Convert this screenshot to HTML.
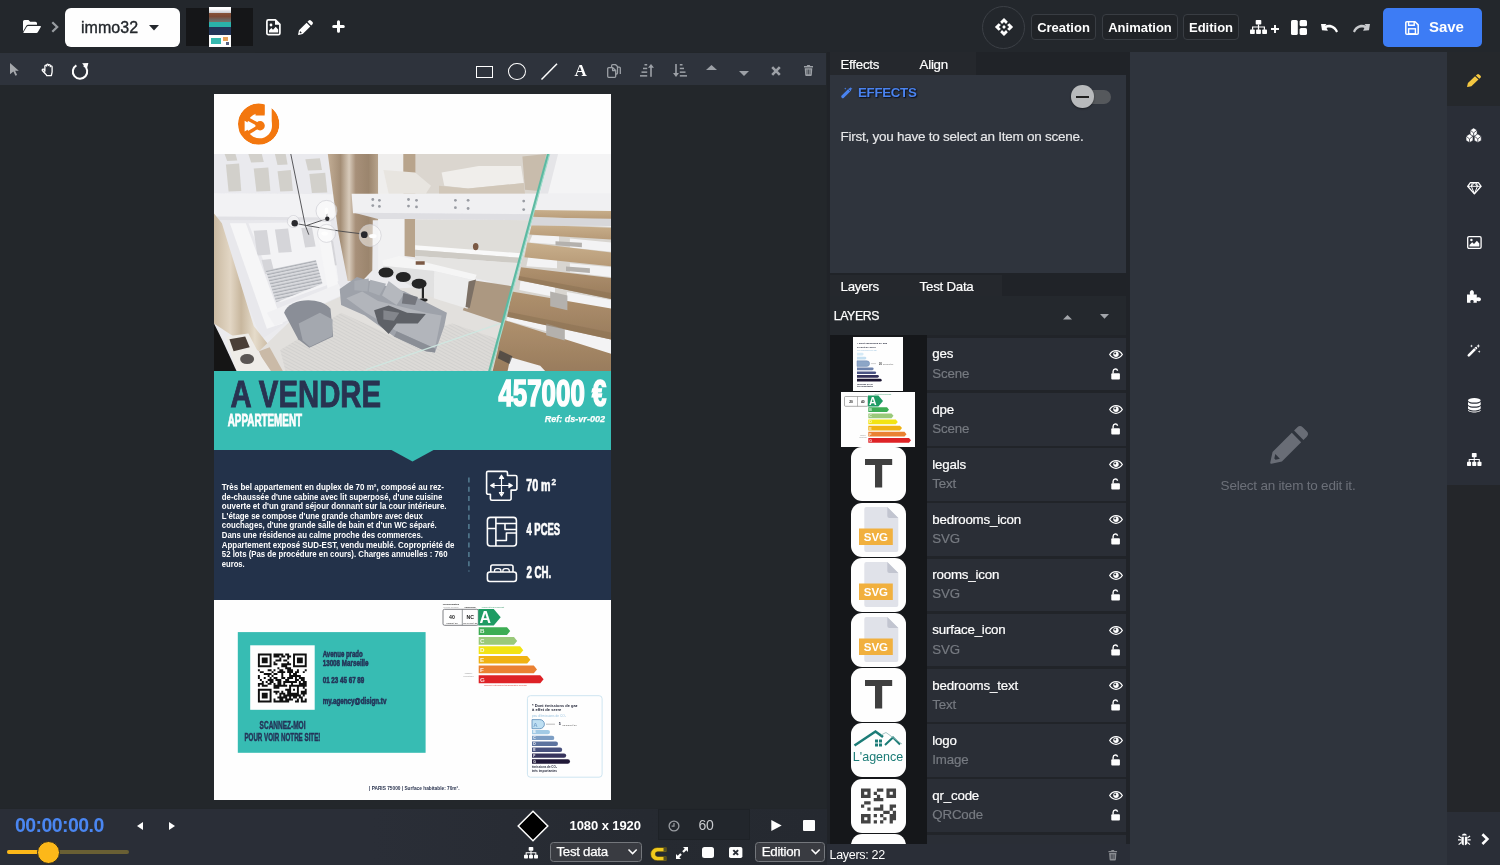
<!DOCTYPE html>
<html lang="en">
<head>
<meta charset="utf-8">
<title>Editor</title>
<style>
*{box-sizing:border-box;margin:0;padding:0}
html,body{width:1500px;height:865px;overflow:hidden;background:#23272b;font-family:"Liberation Sans",Arial,sans-serif;color:#fff}
.abs{position:absolute}
#app{will-change:transform;opacity:.9999;position:relative;width:1500px;height:865px;overflow:hidden;background:#23272b}
#topbar{left:0;top:0;width:1500px;height:52px;background:#24282d}
#toolbar{left:0;top:52.500px;width:825.500px;height:33px;background:#2f343d}
#stage{left:0;top:85px;width:825.500px;height:723px;background:#24282c}
#bottombar{left:0;top:808.500px;width:827px;height:56.500px;background:linear-gradient(90deg,#2b2f38 0,#2b2f38 45%,#272b32 78%,#262a31 100%)}
#mid{left:827px;top:52px;width:303px;height:813px;background:#212429}
#right{left:1130px;top:52px;width:317px;height:813px;background:#30353e}
#strip{left:1447px;top:52px;width:53px;height:813px;background:#25272b}
svg{display:block;position:absolute;overflow:visible}
.tbtn{top:14px;height:26px;border:1px solid #3a3e44;border-radius:4px;background:#212428;font-size:13px;font-weight:bold;line-height:25.600px;text-align:center;color:#fff}
.sel{height:20.500px;border:1px solid #75787d;border-radius:3.500px;background:#3a3c42;-webkit-text-stroke:.25px #fff;font-size:13.300px;line-height:18.500px;padding-left:5.500px;color:#fff}
.tabt{font-size:13.300px;line-height:16px;color:#fff;white-space:nowrap;-webkit-text-stroke:.2px #fff;letter-spacing:-.25px}
.lname{font-size:13.300px;line-height:16px;color:#fff;-webkit-text-stroke:.22px #fff;white-space:nowrap;letter-spacing:-.18px}
.ltype{font-size:13.300px;line-height:16px;color:#777b82;-webkit-text-stroke:.18px #777b82;white-space:nowrap;letter-spacing:-.18px}
/* SECTION-CSS */
</style>
</head>
<body>
<div id="app">
<div id="topbar" class="abs">
<svg style="left:23px;top:20px" width="18" height="14" viewBox="0 0 18 14"><path fill="#fff" d="M0 1.6A1.6 1.6 0 0 1 1.6 0h3.9l1.7 1.7h5.2A1.6 1.6 0 0 1 14 3.3v1.4H5.2a2.2 2.2 0 0 0-1.9 1.1L0 11.4z"/><path fill="#fff" d="M5.2 5.9h12a.7.7 0 0 1 .6 1.1l-2.9 5.1a1.7 1.7 0 0 1-1.5.9H.9a.5.5 0 0 1-.4-.8l3.100-5.300A1.900 1.900 0 0 1 5.200 5.900z"/></svg>
<svg style="left:51px;top:21px" width="8" height="12" viewBox="0 0 8 12"><path fill="none" stroke="#9a9ea3" stroke-width="2.2" d="M1.300 1.200 6.200 6 1.300 10.800"/></svg>
<div class="abs" style="left:65px;top:8px;width:115px;height:39px;background:#fff;border-radius:6px"></div>
<div class="abs" style="left:81px;top:18.800px;font-size:16px;line-height:18px;color:#24282d;-webkit-text-stroke:.35px #24282d;letter-spacing:.05px">immo32</div>
<svg style="left:149px;top:25px" width="10" height="6" viewBox="0 0 10 6"><path fill="#24282d" d="M0 0h10L5 5.500z"/></svg>
<div class="abs" style="left:186px;top:8px;width:67px;height:38px;background:#151618"></div>
<div class="abs" id="thumb" style="left:209px;top:7px;width:22px;height:40px;background:#fff;overflow:hidden">
 <div class="abs" style="left:0;top:4px;width:22px;height:12px;background:linear-gradient(180deg,#8e5a3c 0,#7c4a36 45%,#6b6a66 75%,#85756a 100%)"></div>
 <div class="abs" style="left:0;top:2px;width:22px;height:4px;background:linear-gradient(180deg,#fff,#c7c9cf)"></div>
 <div class="abs" style="left:0;top:15px;width:22px;height:5px;background:#2bb3ac"></div>
 <div class="abs" style="left:0;top:20px;width:22px;height:8px;background:#24365a"></div>
 <div class="abs" style="left:2px;top:31px;width:10px;height:6px;background:#36b9b0"></div>
 <div class="abs" style="left:14px;top:30px;width:5px;height:4px;background:#e8a35c"></div>
 <div class="abs" style="left:17px;top:35px;width:3px;height:3px;background:#596282"></div>
</div>
<svg style="left:266px;top:19px" width="15" height="17" viewBox="0 0 15 17"><path fill="none" stroke="#fff" stroke-width="1.700" stroke-linejoin="round" d="M2.400.9h7l4.500 4.500v8.800a1.500 1.500 0 0 1-1.500 1.500H2.400A1.500 1.500 0 0 1 .9 14.200V2.400A1.500 1.500 0 0 1 2.400.9z"/><path fill="#fff" d="M9 .9v4.800h4.900zM3 13.500v-2l2.300-2.400 1.700 1.600 2.700-3 2.500 2.700v3.100z"/><circle cx="5" cy="6" r="1.400" fill="#fff"/></svg>
<svg style="left:298px;top:20px" width="15" height="15" viewBox="0 0 15 15"><path fill="#fff" d="M10.800.5a1.500 1.500 0 0 1 2.100 0l1.600 1.600a1.500 1.500 0 0 1 0 2.100l-1.300 1.300-3.700-3.700zM8.600 2.700l3.700 3.700-7.600 7.600-4.100.9a.4.400 0 0 1-.5-.5l.9-4.100z"/><path fill="#24282d" d="M2.100 11.100l1.800 1.800-1.700.4-.5-.5z"/></svg>
<svg style="left:332px;top:20px" width="13" height="13" viewBox="0 0 13 13"><path fill="none" stroke="#fff" stroke-width="3" stroke-linecap="round" d="M6.500 1.700v9.600M1.700 6.500h9.600"/></svg>
<div class="abs" style="left:982px;top:5.500px;width:43px;height:43px;border:1px solid #3d4147;border-radius:50%"></div>
<svg style="left:1003.800px;top:27px" width="1" height="1" viewBox="0 0 1 1"><g fill="#fff"><path d="M0 -9.100L3.800 -5.300 2 -3.100 0 -5.100-2 -3.100-3.800 -5.300z"/><path transform="rotate(90)" d="M0 -9.100L3.800 -5.300 2 -3.100 0 -5.100-2 -3.100-3.800 -5.300z"/><path transform="rotate(180)" d="M0 -9.100L3.800 -5.300 2 -3.100 0 -5.100-2 -3.100-3.800 -5.300z"/><path transform="rotate(270)" d="M0 -9.100L3.800 -5.300 2 -3.100 0 -5.100-2 -3.100-3.800 -5.300z"/><path d="M0 -1.900L1.900 0 0 1.900-1.900 0z"/></g></svg>
<div class="tbtn abs" style="left:1031px;width:65px">Creation</div>
<div class="tbtn abs" style="left:1102px;width:76px">Animation</div>
<div class="tbtn abs" style="left:1183px;width:56px">Edition</div>
<svg style="left:1249.500px;top:20px" width="17" height="14" viewBox="0 0 17 14"><g fill="#fff"><rect x="5.700" y="0" width="5.600" height="4.600" rx=".8"/><rect x="0" y="9.400" width="4.800" height="4.600" rx=".8"/><rect x="6.100" y="9.400" width="4.800" height="4.600" rx=".8"/><rect x="12.200" y="9.400" width="4.800" height="4.600" rx=".8"/><path d="M7.900 4.400h1.200v2H15v3.300h-1.200V7.600H9.100v2.100H7.900V7.600H3.200v2.100H2V6.400h5.900z"/></g></svg>
<svg style="left:1271px;top:24.500px" width="8" height="8" viewBox="0 0 8 8"><path fill="none" stroke="#fff" stroke-width="1.900" d="M4 0v8M0 4h8"/></svg>
<svg style="left:1291px;top:19.500px" width="16" height="15" viewBox="0 0 16 15"><g fill="#fff"><rect x="0" y="0" width="6.800" height="15" rx="1.600"/><rect x="8.600" y="0" width="7.400" height="6.300" rx="1.600"/><rect x="8.600" y="8" width="7.400" height="7" rx="1.600"/></g></svg>
<svg style="left:1320.500px;top:22.500px" width="17" height="10" viewBox="0 0 17 10"><path fill="#fff" d="M0 .9l5.600 0L3.900 2.700C8.800.5 14.500 2.400 17 8.400l-1.900 1C13 4.700 9.200 3.700 5.600 4.900L6.900 7.800 1 7.200z"/></svg>
<svg style="left:1353px;top:22.500px" width="17" height="10" viewBox="0 0 17 10"><path fill="#c9cbce" d="M17 .9l-5.600 0 1.700 1.800C8.200.5 2.500 2.400 0 8.400l1.900 1C4 4.700 7.800 3.700 11.400 4.900L10.100 7.800 16 7.200z"/></svg>
<div class="abs" style="left:1382.500px;top:7.500px;width:99px;height:39px;background:#3e7df6;border-radius:5px"></div>
<svg style="left:1404.500px;top:20.500px" width="14" height="14" viewBox="0 0 14 14"><path fill="none" stroke="#fff" stroke-width="1.500" stroke-linejoin="round" d="M1.800.8h8.300l3.100 3.100v8.300a1 1 0 0 1-1 1H1.800a1 1 0 0 1-1-1V1.800a1 1 0 0 1 1-1z"/><path fill="none" stroke="#fff" stroke-width="1.400" d="M3.600 1v3.300h5.600V1"/><rect x="3.600" y="7.800" width="6.800" height="5" fill="none" stroke="#fff" stroke-width="1.400"/></svg>
<div class="abs" style="left:1429px;top:17.500px;font-size:15px;line-height:18px;font-weight:bold;letter-spacing:-.05px">Save</div>
</div>
<div id="toolbar" class="abs">
<svg style="left:10px;top:10.500px" width="9" height="13" viewBox="0 0 9 13"><path fill="#a6a9ad" d="M0 0l8.800 7.700H5.100l2 4.300-1.700.8-2-4.400L0 11.200z"/></svg>
<svg style="left:40.500px;top:10.500px" width="14" height="14" viewBox="0 0 14 14"><path fill="none" stroke="#fff" stroke-width="1.300" stroke-linejoin="round" stroke-linecap="round" d="M3.900 8.300V3.100a.9.900 0 0 1 1.800 0V2a.9.900 0 0 1 1.800 0v.6a.9.900 0 0 1 1.800 0v1.100a.9.900 0 0 1 1.800 0v5.100c0 1.600-.7 2.300-.7 3.800H5.600c0-1-1.200-1.700-2.200-2.800L1.300 7.500a1 1 0 0 1 1.500-1.200z"/></svg>
<svg style="left:71px;top:9.500px" width="19" height="19" viewBox="0 0 19 19"><path fill="none" stroke="#fff" stroke-width="2" d="M12.800 3.400A7.200 7.200 0 1 1 5.400 3.300"/><path fill="#fff" d="M11.100 1.200l6.300-.3-1.600 6z"/></svg>
<div class="abs" style="left:476px;top:13px;width:17px;height:12.500px;border:1.500px solid #fff"></div>
<div class="abs" style="left:508px;top:10px;width:17.500px;height:17px;border:1.500px solid #fff;border-radius:50%"></div>
<svg style="left:541px;top:10px" width="17" height="17" viewBox="0 0 17 17"><path stroke="#fff" stroke-width="1.500" d="M.5 16.500L16 .8"/></svg>
<div class="abs" style="left:574.500px;top:8.500px;font-family:'Liberation Serif','DejaVu Serif',serif;font-weight:bold;font-size:17px;line-height:20px;color:#fff">A</div>
<svg style="left:607px;top:11px" width="14" height="14" viewBox="0 0 14 14"><g fill="none" stroke="#9da1a7" stroke-width="1.300" stroke-linejoin="round"><path d="M4.600 3.500V1.700a1 1 0 0 1 1-1h3.100L10.500 2.500v6.500a1 1 0 0 1-1 1H8.700"/><path d="M1.700 3.700h4.100l2.900 2.700v5.900a1 1 0 0 1-1 1H1.700a1 1 0 0 1-1-1V4.700a1 1 0 0 1 1-1z"/><path d="M5.600 3.900v2.700h3"/></g><path fill="none" stroke="#9da1a7" stroke-width="1.300" d="M10.500 3.200h1.800a1 1 0 0 1 1 1v5.800"/></svg>
<svg style="left:640px;top:11px" width="14" height="13" viewBox="0 0 14 13"><g fill="#9da1a7"><rect x="4.500" y="0" width="2.700" height="1.500"/><rect x="3" y="3.700" width="4.200" height="1.500"/><rect x="1.500" y="7.400" width="5.700" height="1.500"/><rect x="0" y="11.100" width="7.200" height="1.500"/><rect x="10.200" y="2.500" width="1.600" height="10.300"/><path d="M11 0l3 3.800H8z"/></g></svg>
<svg style="left:672.500px;top:11px" width="14" height="13" viewBox="0 0 14 13"><g fill="#9da1a7"><rect x="6.800" y="0" width="2.700" height="1.500"/><rect x="6.800" y="3.700" width="4.200" height="1.500"/><rect x="6.800" y="7.400" width="5.700" height="1.500"/><rect x="6.800" y="11.100" width="7.200" height="1.500"/><rect x="2.200" y="0" width="1.600" height="10.300"/><path d="M3 12.900l3-3.800H0z"/></g></svg>
<svg style="left:706px;top:12.500px" width="11" height="5" viewBox="0 0 11 5"><path fill="#9da1a7" d="M5.500 0L11 5H0z"/></svg>
<svg style="left:738.500px;top:18px" width="10" height="5" viewBox="0 0 10 5"><path fill="#9da1a7" d="M0 0h10L5 5z"/></svg>
<svg style="left:771px;top:13.500px" width="10" height="10" viewBox="0 0 10 10"><path fill="none" stroke="#9da1a7" stroke-width="2.600" d="M1.200 1.200l7.600 7.600M8.800 1.200L1.200 8.800"/></svg>
<svg style="left:804px;top:12.500px" width="9" height="11" viewBox="0 0 9 11"><path fill="#9da1a7" d="M0 1.100h2.700L3.300 0h2.400l.6 1.100H9v1.300H0zM.7 3.200h7.600l-.5 6.800a1 1 0 0 1-1 1H2.200a1 1 0 0 1-1-1z"/><path stroke="#2f343d" stroke-width=".7" d="M3 4.500v4.800M4.500 4.500v4.800M6 4.500v4.800"/></svg>
</div>
<div id="stage" class="abs">
<div class="abs" id="poster" style="left:214px;top:9px;width:397px;height:706px;background:#fff;overflow:hidden">
<svg style="left:0;top:60px;overflow:hidden" width="397" height="217" viewBox="0 0 397 217">
<defs>
 <filter id="pb" x="-5%" y="-5%" width="110%" height="110%"><feGaussianBlur stdDeviation=".7"/></filter>
 <filter id="pb2" x="-5%" y="-5%" width="110%" height="110%"><feGaussianBlur stdDeviation="1.600"/></filter>
 <linearGradient id="colg" x1="0" x2="1" y1="0" y2="0"><stop offset="0" stop-color="#c3ae96"/><stop offset=".25" stop-color="#a58f77"/><stop offset=".42" stop-color="#d8cbbb"/><stop offset=".55" stop-color="#a8917a"/><stop offset=".8" stop-color="#9c866e"/><stop offset="1" stop-color="#b9a58e"/></linearGradient>
 <linearGradient id="curt" x1="0" x2="1" y1="0" y2="0"><stop offset="0" stop-color="#cbbba3"/><stop offset=".3" stop-color="#e3d7c5"/><stop offset=".5" stop-color="#c9b89f"/><stop offset=".75" stop-color="#e6dccb"/><stop offset="1" stop-color="#cdbda6"/></linearGradient>
 <linearGradient id="tr1" x1="0" x2="0" y1="0" y2="1"><stop offset="0" stop-color="#c9b08d"/><stop offset="1" stop-color="#b89b78"/></linearGradient>
 <linearGradient id="tr2" x1="0" x2="0" y1="0" y2="1"><stop offset="0" stop-color="#b0926f"/><stop offset="1" stop-color="#9a7d5e"/></linearGradient>
 <pattern id="rug" width="6" height="6" patternUnits="userSpaceOnUse" patternTransform="rotate(28)"><rect width="6" height="6" fill="#dddbd8"/><path d="M0 1.500h6M0 4.500h6" stroke="#d0cfce" stroke-width=".8"/></pattern>
 <pattern id="rail" width="4" height="3.200" patternUnits="userSpaceOnUse" patternTransform="rotate(-12)"><rect width="4" height="3.200" fill="#d9dade"/><path d="M0 1h4" stroke="#a9acb3" stroke-width="1.100"/></pattern>
</defs>
<rect width="397" height="217" fill="#ececef"/>
<g filter="url(#pb)">
<path fill="#ebebef" d="M0.0 0.0 116.5 0.0 116.5 39.7 0.0 39.7z"/>
<path fill="#d3d1cc" d="M11.9 10.6 25.1 9.5 27.3 37.1 14.6 37.6z"/>
<path fill="#d3d1cc" d="M39.7 14.6 54.3 13.5 56.4 37.1 42.4 37.6z"/>
<path fill="#d3d1cc" d="M63.5 17.2 76.8 16.1 78.9 37.1 66.2 37.6z"/>
<path fill="#d3d1cc" d="M91.3 5.3 105.9 4.2 108.0 15.9 94.0 16.4z"/>
<path fill="#d3d1cc" d="M95.3 19.9 111.2 18.8 113.3 38.4 97.9 38.9z"/>
<path fill="#d3d1cc" d="M34.4 0.0 47.6 -1.1 49.8 7.9 37.1 8.5z"/>
<path fill="#d3d1cc" d="M60.9 0.0 71.5 -1.1 73.6 10.6 63.5 11.1z"/>
<path fill="#d3d1cc" d="M10.6 0.0 21.2 -1.1 23.3 6.6 13.2 7.1z"/>
<path fill="#f3f3f5" d="M0.0 39.2 119.1 40.2 120.4 66.2 0.0 65.1z"/>
<path fill="#e2e2e6" d="M0.0 62.5 120.4 63.5 120.4 66.7 0.0 66.2z"/>
<path fill="#e9e9ed" d="M0.0 66.2 132.3 66.7 137.6 137.6 79.4 164.1 47.6 185.3 15.9 105.9 0.0 79.4z"/>
<path fill="#f4f4f6" d="M34.4 69.3 116.5 67.8 124.4 127.1 66.2 148.2z"/>
<path fill="#d6d6da" d="M39.7 76.8 52.9 76.0 56.6 100.6 43.4 101.4z"/>
<path fill="#d6d6da" d="M60.9 75.4 74.1 74.6 77.8 97.9 64.6 98.7z"/>
<path fill="#d6d6da" d="M87.3 74.1 97.9 73.3 101.6 92.6 91.1 93.4z"/>
<path fill="#d6d6da" d="M47.6 105.9 56.9 105.1 60.6 119.1 51.3 119.9z"/>
<path fill="#d6d6da" d="M66.2 124.4 76.8 123.6 80.5 137.6 69.9 138.4z"/>
<path fill="#d6d6da" d="M111.2 87.3 119.1 86.6 122.8 111.2 114.9 112.0z"/>
<path fill="url(#rail)" d="M51.6 116.5 101.9 105.9 108.5 129.7 62.2 148.2z"/>
<path fill="#f7f7f8" d="M15.9 69.3 31.8 69.3 68.8 169.4 52.9 174.7z"/>
<path fill="#f7f7f8" d="M101.9 67.8 113.8 67.8 124.4 132.3 113.8 136.3z"/>
<path fill="#f2f2f4" d="M52.9 158.8 124.4 129.7 129.7 140.3 60.9 172.0z"/>
<path fill="url(#curt)" d="M0.0 59.6 7.9 69.3 39.7 172.0 54.3 190.6 45.0 197.2 23.8 185.3 0.0 169.4z"/>
<path fill="url(#colg)" d="M113.8 0.0 164.1 0.0 164.6 66.2 158.8 66.2 158.3 116.5 148.2 127.1 133.7 127.1 124.4 79.4z"/>
<path fill="#f0efee" d="M164.1 0.0 189.3 0.0 189.3 39.7 164.1 39.7z"/>
<path fill="#b9a58d" d="M189.3 0.0 201.7 0.0 201.7 39.7 189.3 39.7z"/>
<path fill="#e3e1de" d="M45.0 197.2 79.4 164.1 137.6 137.6 299.1 127.1 288.5 217.0 52.9 217.0z"/>
<path fill="url(#rug)" d="M66.2 195.9 127.1 158.8 185.3 185.3 238.2 169.4 284.5 185.3 280.6 217.0 71.5 217.0z"/>
<path fill="#cbbba8" d="M45.0 197.2 55.6 193.2 68.8 217.0 52.9 217.0z"/>
<path fill="#dcd7d0" d="M201.7 0.0 334.0 0.0 324.2 39.7 201.7 39.7z"/>
<path fill="#e9e6e1" d="M169.4 15.9 201.2 18.5 217.0 31.8 211.8 39.7 174.7 39.7z"/>
<path fill="#f1efec" d="M227.6 18.5 264.7 11.9 307.0 11.9 309.7 29.1 254.1 34.4 230.3 31.8z"/>
<path fill="#d2c8ba" d="M225.0 31.8 254.1 34.4 309.7 29.1 311.0 39.7 225.0 39.7z"/>
<path fill="#c9bdad" d="M308.4 2.6 332.2 0.0 325.6 37.1 311.0 35.7z"/>
<path fill="#f5f5f6" d="M335.6 0.0 397.0 0.0 397.0 39.7 326.1 39.7z"/>
<path fill="#e6e6e9" d="M335.6 0.0 344.1 0.0 334.0 39.7 326.1 39.7z"/>
<path fill="#f1f1f3" d="M137.6 39.7 397.0 39.7 397.0 56.9 321.6 56.9 321.1 60.3 139.0 59.3z"/>
<path fill="#dfdfe3" d="M140.3 58.8 320.3 60.3 319.7 66.2 164.1 65.1z"/>
<g fill="#9a9da4"><circle cx="158.8" cy="45.5" r="1.400"/><circle cx="158.8" cy="51.6" r="1.400"/><circle cx="165.4" cy="46.3" r="1.400"/><circle cx="165.4" cy="52.4" r="1.400"/><circle cx="194.5" cy="45.5" r="1.400"/><circle cx="194.5" cy="52.1" r="1.400"/><circle cx="202.5" cy="46.3" r="1.400"/><circle cx="202.5" cy="52.9" r="1.400"/><circle cx="241.4" cy="46.3" r="1.400"/><circle cx="241.4" cy="53.7" r="1.400"/><circle cx="254.1" cy="46.3" r="1.400"/><circle cx="254.1" cy="54.5" r="1.400"/><circle cx="309.7" cy="47.1" r="1.400"/><circle cx="309.7" cy="55.6" r="1.400"/></g>
<path fill="#f2f2f3" d="M164.1 65.1 190.6 65.1 190.6 124.4 164.1 116.5z"/>
<path fill="#b9a58d" d="M190.6 65.1 201.2 65.1 201.2 103.2 190.6 101.9z"/>
<path fill="#e0deda" d="M201.2 65.6 316.3 66.2 304.4 111.2 201.2 95.3z"/>
<path fill="#fafafa" d="M201.2 91.3 307.0 99.3 305.7 103.8 201.2 95.8z"/>
<path fill="#cfccc6" d="M201.2 95.8 305.7 103.8 304.4 109.1 201.2 101.9z"/>
<path fill="#e6e5e3" d="M201.2 101.9 304.4 109.1 297.8 132.3 262.0 124.4 201.2 108.5z"/>
<path fill="#ad9982" d="M260.7 126.5 298.6 132.3 288.5 169.4 248.8 156.2z"/>
<path fill="#f6f6f6" d="M168.3 106.4 185.3 101.9 262.6 120.7 260.7 126.5 220.2 117.0 169.4 111.7z"/>
<path fill="#ededed" d="M220.2 117.0 260.7 126.5 253.6 154.8 219.7 144.3z"/>
<path fill="#e2e2e2" d="M169.4 111.7 220.2 117.0 219.7 144.3 206.5 137.6 169.4 116.5z"/>
<path fill="#7d7166" d="M254.6 127.6 262.0 125.5 255.7 154.0 251.5 153.0z"/>
<g fill="#262628"><ellipse cx="172.0" cy="118.6" rx="7.500" ry="5"/><ellipse cx="189.3" cy="123.1" rx="7.500" ry="5"/><ellipse cx="205.1" cy="129.7" rx="7.500" ry="5"/><path d="M207.8 132.3h2.200v12h-2.200z"/><ellipse cx="209.1" cy="146.1" rx="4.500" ry="1.800"/></g>
<path fill="#9fa3ab" d="M125.7 135.0 142.9 123.1 190.6 137.6 232.9 158.8 230.3 172.0 221.0 198.5 211.8 197.2 180.0 182.6 150.9 161.5 127.1 150.9z"/>
<path fill="#b3b6bc" d="M132.3 144.3 148.2 137.6 164.1 146.9 211.8 158.8 227.6 161.5 221.0 194.5 182.6 177.3 152.2 158.8z"/>
<path fill="#a9adb4" d="M140.3 127.1 154.8 124.4 153.5 137.6 140.3 136.3z"/>
<path fill="#abafb6" d="M156.2 125.7 172.0 129.7 165.4 141.6 154.8 137.6z"/>
<path fill="#b6b9bf" d="M174.7 127.1 190.6 139.0 182.6 150.9 168.1 141.6z"/>
<path fill="#74777e" d="M189.3 139.0 203.8 142.9 201.2 150.9 187.9 149.6z"/>
<path fill="#8b8f97" d="M182.6 177.3 221.0 194.5 221.0 198.5 211.8 197.2 180.0 182.6z"/>
<path fill="#5f6268" d="M160.1 156.2 174.7 151.4 193.2 158.8 211.8 160.1 203.8 169.4 182.6 169.4 174.7 180.0 164.1 169.4z"/>
<path fill="#84878d" d="M169.4 156.2 185.3 158.8 180.0 166.8 169.4 165.4z"/>
<path fill="#8b8f98" d="M70.1 158.8C74.1 144.3 105.9 141.6 116.5 154.8L119.1 182.6 95.3 193.8 84.2 185.3z"/>
<path fill="#a5a9b0" d="M84.7 169.4 105.9 158.8 118.6 165.4 118.3 182.1 95.8 192.7 88.7 186.6z"/>
<path fill="#efede9" d="M11.9 182.6 34.4 179.5 43.7 197.2 56.9 217.0 22.5 217.0z"/>
<path fill="#4b4139" d="M15.4 185.3 31.2 182.6 35.7 193.2 19.6 197.2z"/>
<ellipse cx="33.1" cy="205.1" rx="7" ry="5" fill="#5a5754"/>
<path fill="#141416" d="M0.0 169.4 7.9 185.3 22.5 217.0 0.0 217.0z"/>
<path fill="#d9d6d1" d="M321.6 56.9 397.0 56.9 397.0 217.0 276.6 217.0z"/>
<path fill="#f4f4f5" d="M319.3 64.8 346.0 65.2 346.0 70.7 318.3 70.1z"/><path fill="#f4f4f5" d="M355.9 65.8 397.0 66.8 397.0 72.7 355.9 71.3z"/><path fill="#f4f4f5" d="M318.3 81.2 345.0 82.0 345.0 90.5 315.3 88.5z"/><path fill="#f4f4f5" d="M355.9 84.6 397.0 88.5 397.0 97.8 355.9 93.5z"/><path fill="#f4f4f5" d="M314.3 102.4 343.0 105.3 343.0 114.2 312.4 112.2z"/><path fill="#f4f4f5" d="M355.9 109.3 397.0 113.2 397.0 123.1 355.9 118.2z"/><path fill="#f4f4f5" d="M306.4 127.1 341.0 133.0 341.0 142.9 305.4 136.0z"/><path fill="#f4f4f5" d="M352.9 138.0 397.0 145.9 397.0 156.7 352.9 147.8z"/><path fill="#f4f4f5" d="M294.6 157.7 337.1 167.6 337.1 178.5 292.6 166.6z"/><path fill="#f4f4f5" d="M350.9 174.5 397.0 185.4 397.0 200.2 350.9 186.4z"/><path fill="#f4f4f5" d="M298.5 204.2 325.2 212.1 325.2 217.1 295.5 217.1z"/>
<path fill="url(#tr1)" d="M320.3 55.9 397.0 56.9 397.0 65.8 318.9 62.8z"/>
<path fill="url(#tr1)" d="M317.7 70.7 397.0 73.7 397.0 85.5 315.3 80.6z"/>
<path fill="url(#tr1)" d="M313.3 88.5 397.0 98.4 397.0 112.2 310.4 103.3z"/>
<path fill="url(#tr2)" d="M307.0 113.2 397.0 124.1 397.0 144.9 304.4 126.1z"/>
<path fill="url(#tr2)" d="M297.9 137.4 397.0 154.4 397.0 185.4 293.2 162.7z"/>
<path fill="url(#tr2)" d="M288.6 165.6 397.0 199.8 397.0 217.1 278.7 217.1 283.7 196.3z"/>
<path fill="#b5b2ae" d="M341.5 87.3 367.9 88.7 367.9 93.2 341.5 91.3z"/>
<path fill="#b5b2ae" d="M336.2 137.6 353.4 141.6 353.4 156.2 336.2 152.2z"/>
<path fill="#b5b2ae" d="M332.2 169.4 350.7 175.2 350.7 186.6 332.2 181.3z"/>
<path fill="#b5b2ae" d="M352.0 112.5 375.9 114.3 375.9 119.1 352.0 117.0z"/>
<path fill="#d8d8db" d="M319.0 63.5 397.0 64.8 397.0 72.0 317.1 71.5z"/>
<path fill="#8c7254" opacity=".55" d="M304.4 126.1 397.0 144.9 397.0 138.9 305.0 122.1z"/><path fill="#8c7254" opacity=".55" d="M293.2 162.7 397.0 185.4 397.0 178.5 294.0 157.7z"/><path fill="#f1f1f2" d="M296.5 203.2 326.2 211.7 331.1 217.1 293.6 217.1z"/><path fill="#3a3a3c" d="M285.7 196.3 298.5 202.2 295.5 210.1 283.7 204.2z" opacity=".7"/>
<path stroke="#5dbba3" stroke-width="2.800" fill="none" d="M334.6 -1L275.3 218.1"/>
<path stroke="#a6dccd" stroke-width="1.100" fill="none" d="M335.9 -1L276.6 218.1"/>
<path stroke="#cfe9e2" stroke-width="1.300" fill="none" opacity=".9" d="M286.4 169.4L152.2 215.7"/>
<g stroke="#47474b" stroke-width=".9" fill="none"><path d="M76.8 0L91.3 71.5 94.8 80.7M80.7 69.3L92.6 71.5 127.1 77.3 150.9 80.2M92.6 71.5L112.5 64.8 113.3 56.9"/></g>
<g fill="#fff" fill-opacity=".5" stroke="#c9cad0" stroke-width=".6"><circle cx="112.5" cy="56.9" r="10.500"/><circle cx="112.5" cy="79.4" r="9"/><circle cx="156.2" cy="81.5" r="11"/><circle cx="79.4" cy="67.5" r="6"/></g>
<g fill="#2c2c2f"><circle cx="80.7" cy="69.3" r="3.200"/><circle cx="150.3" cy="80.7" r="3.400"/><circle cx="113.3" cy="64.8" r="2.200"/></g>
<g fill="#fff"><ellipse cx="112.5" cy="56.9" rx="1.800" ry="3.300"/><ellipse cx="158.8" cy="82.1" rx="3.800" ry="2.200"/><ellipse cx="110.6" cy="79.4" rx="3.300" ry="2"/></g>
<path fill="#7c5a44" d="M258.9 92.6a2.800 3.600 0 1 0 5.600 0a2.800 3.600 0 1 0 -5.600 0zM201.7 107.2h9v3.500h-9z"/>
</g>
</svg>
<div class="abs" style="left:0;top:276.500px;width:397px;height:80px;background:#38bdb4"></div>
<div class="abs" style="left:0;top:356px;width:397px;height:150px;background:#24334b"></div>
<svg style="left:0;top:0" width="397" height="706" viewBox="0 0 397 706" font-family="'Liberation Sans',Arial,sans-serif">
 <path fill="#38bdb4" d="M176.500 355.500h44L198.500 367.400z"/>
 <!-- logo -->
 <g transform="translate(44.700 30.100)">
  <circle r="20.700" fill="#f4780f"/>
  <circle cx=".8" cy="1.700" r="12.500" fill="#fff"/>
  <rect x="-3.200" y="-21" width="9.300" height="12.400" fill="#f4780f"/>
  <rect x="6.100" y="-22" width="6.900" height="24" fill="#fff"/>
  <path stroke="#f4780f" stroke-width="3.400" stroke-linecap="round" d="M1.400 1.600L-11.600 -5.700M1.400 1.600L-12 9.700"/>
  <path fill="#f4780f" d="M-12 -7.500L-20 -7.500-20 11.500-12 11.500-14 2z"/>
  <path fill="#fff" d="M-14.100 -3.300L-4.600 2-14.100 7.500z"/>
  <circle cx="1.400" cy="1.600" r="4.700" fill="#f4780f"/>
  <circle r="22.600" fill="none" stroke="#fff" stroke-width="3.800"/>
 </g>
 <text x="16.600" y="313" font-weight="bold" font-size="37.300" fill="#2a3452" stroke="#2a3452" stroke-width=".9" textLength="150.500" lengthAdjust="spacingAndGlyphs">A VENDRE</text>
 <text x="13.700" y="332.300" font-weight="bold" font-size="16.300" fill="#fff" stroke="#fff" stroke-width=".8" textLength="74.400" lengthAdjust="spacingAndGlyphs">APPARTEMENT</text>
 <text x="284.400" y="312.300" font-weight="bold" font-size="37.500" fill="#fff" stroke="#fff" stroke-width="1.700" textLength="108" lengthAdjust="spacingAndGlyphs">457000 €</text>
 <text x="330.700" y="327.700" font-weight="bold" font-style="italic" font-size="9.400" fill="#fff" stroke="#fff" stroke-width=".25" textLength="60.300" lengthAdjust="spacingAndGlyphs">Ref: ds-vr-002</text>
 <g font-size="8.300" font-weight="bold" fill="#fff" style="font-weight:600">
<text x="7.8" y="395.9" textLength="222.2" lengthAdjust="spacingAndGlyphs">Très bel appartement en duplex de 70 m², composé au rez-</text>
<text x="7.8" y="405.5" textLength="220.5" lengthAdjust="spacingAndGlyphs">de-chaussée d'une cabine avec lit superposé, d'une cuisine</text>
<text x="7.8" y="415.1" textLength="224.8" lengthAdjust="spacingAndGlyphs">ouverte et d'un grand séjour donnant sur la cour intérieure.</text>
<text x="7.8" y="424.7" textLength="201.1" lengthAdjust="spacingAndGlyphs">L'étage se compose d'une grande chambre avec deux</text>
<text x="7.8" y="434.3" textLength="214.9" lengthAdjust="spacingAndGlyphs">couchages, d'une grande salle de bain et d'un WC séparé.</text>
<text x="7.8" y="443.9" textLength="201.1" lengthAdjust="spacingAndGlyphs">Dans une résidence au calme proche des commerces.</text>
<text x="7.8" y="453.5" textLength="232.6" lengthAdjust="spacingAndGlyphs">Appartement exposé SUD-EST, vendu meublé. Copropriété de</text>
<text x="7.8" y="463.1" textLength="225.7" lengthAdjust="spacingAndGlyphs">52 lots (Pas de procédure en cours). Charges annuelles : 760</text>
<text x="7.8" y="472.7" textLength="22.9" lengthAdjust="spacingAndGlyphs">euros.</text>

 </g>
 <path stroke="#5d8aa0" stroke-width="1.300" stroke-dasharray="5 4.300" d="M254.900 383.500v94"/>
 <!-- surface icon -->
 <g fill="none" stroke="#fff" stroke-width="1.600" stroke-linejoin="round" stroke-linecap="round">
  <path d="M274.500 377.400h17.500a1.500 1.500 0 0 1 1.500 1.500v2.600h7.900a1.500 1.500 0 0 1 1.500 1.500v11.600a1.500 1.500 0 0 1-1.500 1.500h-4.300v8.600a1.500 1.500 0 0 1-1.500 1.500h-17.700a1.500 1.500 0 0 1-1.500-1.500v-4.400h-2.300a1.500 1.500 0 0 1-1.500-1.500v-20a1.500 1.500 0 0 1 1.500-1.500z" />
  <path stroke-width="1.200" d="M287.500 382v19M277 391.500h21M285.400 384.500l2.100-3.300 2.100 3.300zM285.400 398.700l2.100 3.300 2.100-3.300zM280 389.400l-3.300 2.100 3.300 2.100zM295 389.400l3.300 2.100-3.300 2.100z"/>
 </g>
 <!-- rooms icon -->
 <g fill="none" stroke="#fff" stroke-width="1.600" stroke-linejoin="round">
  <rect x="273.400" y="423.400" width="29" height="28.600" rx="3"/>
  <path d="M273.400 434.500h8.500v17.500M281.900 423.400v11.100M281.900 429.500h21M291 429.500v6h11.400M281.900 446.500h10.500v-7.500h10"/>
 </g>
 <!-- bed icon -->
 <g fill="none" stroke="#fff" stroke-width="1.600" stroke-linejoin="round">
  <rect x="273.400" y="478" width="29" height="9.500" rx="2.500"/>
  <path d="M276.800 478v-5.200a1.800 1.800 0 0 1 1.800-1.800h18.600a1.800 1.800 0 0 1 1.800 1.800v5.200"/>
  <path stroke-width="1.300" d="M280.500 478v-1.200a2.200 2.200 0 0 1 2.200-2.200h2a2.200 2.200 0 0 1 2.200 2.200v1.200M288.900 478v-1.200a2.200 2.200 0 0 1 2.200-2.200h2a2.200 2.200 0 0 1 2.200 2.200v1.200"/>
 </g>
 <g font-weight="bold" fill="#fff" stroke="#fff" stroke-width=".7" font-size="15.800">
  <text x="312.300" y="396.500" textLength="24.300" lengthAdjust="spacingAndGlyphs">70 m</text>
  <text x="337.400" y="390.800" font-size="9.500" stroke-width=".3" textLength="4.600" lengthAdjust="spacingAndGlyphs">2</text>
  <text x="312.500" y="440.800" textLength="33.500" lengthAdjust="spacingAndGlyphs">4 PCES</text>
  <text x="312.500" y="484.200" textLength="24.800" lengthAdjust="spacingAndGlyphs">2 CH.</text>
 </g>
<rect x="23.8" y="538.1" width="187.8" height="120.7" fill="#38bdb4"/>
<rect x="36.2" y="551.3" width="64.5" height="64.5" fill="#fff"/>
<path fill="#111" d="M43.90 559.60h13.66v1.95h-13.66zM59.52 559.60h9.76v1.95h-9.76zM71.23 559.60h3.90v1.95h-3.90zM79.04 559.60h13.66v1.95h-13.66zM43.90 561.55h1.95v1.95h-1.95zM55.61 561.55h1.95v1.95h-1.95zM59.52 561.55h5.86v1.95h-5.86zM67.32 561.55h3.90v1.95h-3.90zM73.18 561.55h3.90v1.95h-3.90zM79.04 561.55h1.95v1.95h-1.95zM90.75 561.55h1.95v1.95h-1.95zM43.90 563.50h1.95v1.95h-1.95zM47.80 563.50h5.86v1.95h-5.86zM55.61 563.50h1.95v1.95h-1.95zM65.37 563.50h1.95v1.95h-1.95zM73.18 563.50h1.95v1.95h-1.95zM79.04 563.50h1.95v1.95h-1.95zM82.94 563.50h5.86v1.95h-5.86zM90.75 563.50h1.95v1.95h-1.95zM43.90 565.46h1.95v1.95h-1.95zM47.80 565.46h5.86v1.95h-5.86zM55.61 565.46h1.95v1.95h-1.95zM61.47 565.46h5.86v1.95h-5.86zM69.28 565.46h3.90v1.95h-3.90zM79.04 565.46h1.95v1.95h-1.95zM82.94 565.46h5.86v1.95h-5.86zM90.75 565.46h1.95v1.95h-1.95zM43.90 567.41h1.95v1.95h-1.95zM47.80 567.41h5.86v1.95h-5.86zM55.61 567.41h1.95v1.95h-1.95zM59.52 567.41h1.95v1.95h-1.95zM73.18 567.41h1.95v1.95h-1.95zM79.04 567.41h1.95v1.95h-1.95zM82.94 567.41h5.86v1.95h-5.86zM90.75 567.41h1.95v1.95h-1.95zM43.90 569.36h1.95v1.95h-1.95zM55.61 569.36h1.95v1.95h-1.95zM59.52 569.36h3.90v1.95h-3.90zM67.32 569.36h9.76v1.95h-9.76zM79.04 569.36h1.95v1.95h-1.95zM90.75 569.36h1.95v1.95h-1.95zM43.90 571.31h13.66v1.95h-13.66zM67.32 571.31h5.86v1.95h-5.86zM79.04 571.31h13.66v1.95h-13.66zM63.42 573.26h1.95v1.95h-1.95zM71.23 573.26h5.86v1.95h-5.86zM43.90 575.22h1.95v1.95h-1.95zM53.66 575.22h3.90v1.95h-3.90zM59.52 575.22h1.95v1.95h-1.95zM65.37 575.22h3.90v1.95h-3.90zM73.18 575.22h5.86v1.95h-5.86zM82.94 575.22h1.95v1.95h-1.95zM90.75 575.22h1.95v1.95h-1.95zM45.85 577.17h3.90v1.95h-3.90zM57.56 577.17h1.95v1.95h-1.95zM63.42 577.17h7.81v1.95h-7.81zM73.18 577.17h5.86v1.95h-5.86zM80.99 577.17h3.90v1.95h-3.90zM88.80 577.17h1.95v1.95h-1.95zM49.76 579.12h7.81v1.95h-7.81zM59.52 579.12h3.90v1.95h-3.90zM67.32 579.12h1.95v1.95h-1.95zM75.13 579.12h1.95v1.95h-1.95zM79.04 579.12h3.90v1.95h-3.90zM43.90 581.07h1.95v1.95h-1.95zM53.66 581.07h1.95v1.95h-1.95zM57.56 581.07h1.95v1.95h-1.95zM67.32 581.07h1.95v1.95h-1.95zM75.13 581.07h11.71v1.95h-11.71zM43.90 583.02h1.95v1.95h-1.95zM49.76 583.02h1.95v1.95h-1.95zM55.61 583.02h1.95v1.95h-1.95zM59.52 583.02h3.90v1.95h-3.90zM67.32 583.02h3.90v1.95h-3.90zM73.18 583.02h5.86v1.95h-5.86zM80.99 583.02h1.95v1.95h-1.95zM84.89 583.02h5.86v1.95h-5.86zM45.85 584.98h1.95v1.95h-1.95zM53.66 584.98h5.86v1.95h-5.86zM61.47 584.98h5.86v1.95h-5.86zM71.23 584.98h3.90v1.95h-3.90zM80.99 584.98h3.90v1.95h-3.90zM86.84 584.98h3.90v1.95h-3.90zM47.80 586.93h1.95v1.95h-1.95zM51.71 586.93h1.95v1.95h-1.95zM55.61 586.93h3.90v1.95h-3.90zM63.42 586.93h3.90v1.95h-3.90zM69.28 586.93h13.66v1.95h-13.66zM84.89 586.93h1.95v1.95h-1.95zM88.80 586.93h3.90v1.95h-3.90zM43.90 588.88h5.86v1.95h-5.86zM53.66 588.88h3.90v1.95h-3.90zM59.52 588.88h1.95v1.95h-1.95zM63.42 588.88h3.90v1.95h-3.90zM69.28 588.88h1.95v1.95h-1.95zM77.08 588.88h1.95v1.95h-1.95zM84.89 588.88h7.81v1.95h-7.81zM43.90 590.83h1.95v1.95h-1.95zM47.80 590.83h5.86v1.95h-5.86zM59.52 590.83h13.66v1.95h-13.66zM75.13 590.83h17.57v1.95h-17.57zM59.52 592.78h5.86v1.95h-5.86zM75.13 592.78h1.95v1.95h-1.95zM82.94 592.78h1.95v1.95h-1.95zM88.80 592.78h1.95v1.95h-1.95zM43.90 594.74h13.66v1.95h-13.66zM71.23 594.74h5.86v1.95h-5.86zM79.04 594.74h1.95v1.95h-1.95zM82.94 594.74h1.95v1.95h-1.95zM90.75 594.74h1.95v1.95h-1.95zM43.90 596.69h1.95v1.95h-1.95zM55.61 596.69h1.95v1.95h-1.95zM59.52 596.69h5.86v1.95h-5.86zM67.32 596.69h1.95v1.95h-1.95zM73.18 596.69h3.90v1.95h-3.90zM82.94 596.69h1.95v1.95h-1.95zM86.84 596.69h5.86v1.95h-5.86zM43.90 598.64h1.95v1.95h-1.95zM47.80 598.64h5.86v1.95h-5.86zM55.61 598.64h1.95v1.95h-1.95zM61.47 598.64h1.95v1.95h-1.95zM65.37 598.64h5.86v1.95h-5.86zM73.18 598.64h11.71v1.95h-11.71zM86.84 598.64h5.86v1.95h-5.86zM43.90 600.59h1.95v1.95h-1.95zM47.80 600.59h5.86v1.95h-5.86zM55.61 600.59h1.95v1.95h-1.95zM65.37 600.59h1.95v1.95h-1.95zM69.28 600.59h17.57v1.95h-17.57zM88.80 600.59h1.95v1.95h-1.95zM43.90 602.54h1.95v1.95h-1.95zM47.80 602.54h5.86v1.95h-5.86zM55.61 602.54h1.95v1.95h-1.95zM63.42 602.54h9.76v1.95h-9.76zM75.13 602.54h1.95v1.95h-1.95zM79.04 602.54h3.90v1.95h-3.90zM84.89 602.54h3.90v1.95h-3.90zM43.90 604.50h1.95v1.95h-1.95zM55.61 604.50h1.95v1.95h-1.95zM59.52 604.50h1.95v1.95h-1.95zM65.37 604.50h3.90v1.95h-3.90zM71.23 604.50h7.81v1.95h-7.81zM82.94 604.50h1.95v1.95h-1.95zM86.84 604.50h1.95v1.95h-1.95zM90.75 604.50h1.95v1.95h-1.95zM43.90 606.45h13.66v1.95h-13.66zM59.52 606.45h15.62v1.95h-15.62zM80.99 606.45h3.90v1.95h-3.90zM86.84 606.45h5.86v1.95h-5.86z"/>
<g font-weight="bold" fill="#25365a" stroke="#25365a" stroke-width=".55" font-size="8.200">
<text x="108.7" y="562.5" textLength="40" lengthAdjust="spacingAndGlyphs">Avenue prado</text>
<text x="108.7" y="571.9" textLength="45.900" lengthAdjust="spacingAndGlyphs">13008 Marseille</text>
<text x="108.7" y="588.6" textLength="41.600" lengthAdjust="spacingAndGlyphs">01 23 45 67 89</text>
<text x="108.7" y="610" textLength="63.700" lengthAdjust="spacingAndGlyphs">my.agency@disign.tv</text>
</g>
<g font-weight="bold" fill="#25365a" stroke="#25365a" stroke-width=".5" font-size="10.800">
<text x="45.6" y="635.2" textLength="45.900" lengthAdjust="spacingAndGlyphs">SCANNEZ-MOI</text>
<text x="30.4" y="646.9" textLength="76" lengthAdjust="spacingAndGlyphs">POUR VOIR NOTRE SITE!</text>
</g>
<text x="155" y="696.3" font-weight="bold" font-size="5.400" fill="#2b3550" textLength="90.500" lengthAdjust="spacingAndGlyphs">| PARIS 75000 | Surface habitable: 70m².</text>
<rect x="229" y="515.3" width="35.300" height="16" rx="1.500" fill="#fff" stroke="#6f7277" stroke-width=".9"/>
<path stroke="#6f7277" stroke-width=".7" d="M248.3 515.3v16"/>
<g font-weight="bold" fill="#222" text-anchor="middle">
<text x="238" y="525.2" font-size="5.200">40</text><text x="256.3" y="525.2" font-size="5.200">NC</text>
<text x="238" y="529.6" font-size="2.200" fill="#555">kWh/m².an</text><text x="256.3" y="529.6" font-size="2.200" fill="#555">kg CO₂/m².an</text>
<text x="237" y="511" font-size="2.300" fill="#333">consommation</text>
<text x="237" y="513.8" font-size="2" fill="#999" font-weight="normal">(énergie primaire)</text>
<text x="256" y="513.8" font-size="2.300" fill="#333">émissions</text>
<text x="279" y="513.8" font-size="2" fill="#3a9a6a" font-weight="normal">logement très performant</text>
<text x="254.5" y="580" font-size="2" fill="#999" font-weight="normal">passoire</text>
<text x="254.5" y="582.8" font-size="2" fill="#999" font-weight="normal">énergétique</text>
<text x="291.5" y="592" font-size="2" fill="#d9382e" font-weight="normal">logement extrêmement consommateur d'énergie</text>
</g>
<path fill="#1f9c64" d="M264.3 515H279.73L286.7 523.3 279.73 531.6H264.3z"/>
<text x="265.5" y="529.2" font-size="17" font-weight="bold" fill="#fff" textLength="11.500" lengthAdjust="spacingAndGlyphs">A</text>
<path fill="#3eae55" d="M264.7 533.2H292.97L296.2 537.05 292.97 540.9H264.7z"/>
<text x="266" y="539.3" font-size="6.200" font-weight="bold" fill="#fff" fill-opacity=".85">B</text>
<path fill="#9bca7b" d="M264.7 543.1H299.97L303.2 546.95 299.97 550.8H264.7z"/>
<text x="266" y="549.2" font-size="6.200" font-weight="bold" fill="#fff" fill-opacity=".85">C</text>
<path fill="#f3e514" d="M264.7 552.3H306.07L309.3 556.15 306.07 560H264.7z"/>
<text x="266" y="558.4" font-size="6.200" font-weight="bold" fill="#fff" fill-opacity=".85">D</text>
<path fill="#f1b313" d="M264.7 562H313.21L316.4 565.8 313.21 569.6H264.7z"/>
<text x="266" y="568.0" font-size="6.200" font-weight="bold" fill="#fff" fill-opacity=".85">E</text>
<path fill="#eb8233" d="M264.7 571.6H319.77L323 575.45 319.77 579.3H264.7z"/>
<text x="266" y="577.7" font-size="6.200" font-weight="bold" fill="#fff" fill-opacity=".85">F</text>
<path fill="#df2327" d="M264.7 581.3H326.28L329.6 585.25 326.28 589.2H264.7z"/>
<text x="266" y="587.6" font-size="6.200" font-weight="bold" fill="#fff" fill-opacity=".85">G</text>
<rect x="313.4" y="601.7" width="74.700" height="81.500" rx="3" fill="#fff" stroke="#cfe6f2" stroke-width="1"/>
<g font-weight="bold" fill="#1e2235" font-size="3.700">
<text x="318" y="612.5" textLength="45.600" lengthAdjust="spacingAndGlyphs">* Dont émissions de gaz</text>
<text x="318" y="616.7" textLength="29.300" lengthAdjust="spacingAndGlyphs">à effet de serre</text>
<text x="318" y="623" font-size="2.600" fill="#9cc4e0" font-weight="normal" textLength="34" lengthAdjust="spacingAndGlyphs">peu d'émissions de CO₂</text>
<text x="318" y="674" font-size="2.600" textLength="25" lengthAdjust="spacingAndGlyphs">émissions de CO₂</text>
<text x="318" y="678.4" font-size="2.600" textLength="25" lengthAdjust="spacingAndGlyphs">très importantes</text>
<text x="344.8" y="631.4" font-size="3.600">5</text>
<text x="348.5" y="632.2" font-size="2.300" font-weight="normal" fill="#444">kg CO₂/m².an</text>
</g>
<path stroke="#555" stroke-width=".4" d="M332 630.2h9"/>
<path fill="#bfe0f3" stroke="#5b8bb7" stroke-width=".8" d="M318 625.6H325.85a4.55 4.55 0 0 1 0 9.10H318z"/>
<text x="319.2" y="632.8" font-size="6" font-weight="bold" fill="#7aa6cf">A</text>
<path fill="#a3cbe6" d="M318 635.9H333.8a2.20 2.20 0 0 1 0 4.40H318z"/>
<text x="319.2" y="639.3" font-size="3.4" font-weight="bold" fill="#fff">B</text>
<path fill="#7e9fc5" d="M318 641.7H338.1a2.20 2.20 0 0 1 0 4.40H318z"/>
<text x="319.2" y="645.1" font-size="3.4" font-weight="bold" fill="#fff">C</text>
<path fill="#5e749f" d="M318 647.6H341.8a2.20 2.20 0 0 1 0 4.40H318z"/>
<text x="319.2" y="651" font-size="3.4" font-weight="bold" fill="#fff">D</text>
<path fill="#49527e" d="M318 653.5H346.0a2.20 2.20 0 0 1 0 4.40H318z"/>
<text x="319.2" y="656.9" font-size="3.4" font-weight="bold" fill="#fff">E</text>
<path fill="#39365e" d="M318 659.4H350.0a2.20 2.20 0 0 1 0 4.40H318z"/>
<text x="319.2" y="662.8" font-size="3.4" font-weight="bold" fill="#fff">F</text>
<path fill="#221a39" d="M318 665.2H353.75a2.25 2.25 0 0 1 0 4.50H318z"/>
<text x="319.2" y="668.7" font-size="3.4" font-weight="bold" fill="#fff">G</text>
</svg>
</div>
</div>
<div id="bottombar" class="abs"><div class="abs" style="left:0;top:-.5px;width:827px;height:57px">
<div class="abs" style="left:15px;top:5.5px;font-size:19.500px;line-height:23px;font-weight:bold;color:#4b87f2;letter-spacing:-.56px">00:00:00.0</div>
<svg style="left:136.500px;top:13.5px" width="6" height="8" viewBox="0 0 6 8"><path fill="#fff" d="M6 0v8L0 4z"/></svg>
<svg style="left:168.500px;top:13.5px" width="6" height="8" viewBox="0 0 6 8"><path fill="#fff" d="M0 0v8L6 4z"/></svg>
<div class="abs" style="left:7px;top:41.7px;width:122px;height:4.600px;border-radius:2.300px;background:#6a6035"></div>
<div class="abs" style="left:7px;top:41.7px;width:42px;height:4.600px;border-radius:2.300px;background:#fdb91a"></div>
<div class="abs" style="left:36.500px;top:32.600px;width:23px;height:23px;border-radius:50%;background:#fdb91a;border:1px solid #2b2a23"></div>
<svg style="left:517px;top:2.3px" width="32" height="32" viewBox="0 0 32 32"><path fill="#000" stroke="#fff" stroke-width="1.500" d="M16 1.200L30.800 16 16 30.800 1.200 16z"/></svg>
<div class="abs" style="left:569.500px;top:9.5px;font-size:13px;line-height:16px;font-weight:bold;letter-spacing:-.08px">1080 x 1920</div>
<div class="abs" style="left:657.500px;top:0.7px;width:92px;height:31.500px;background:#23272d;border:1px solid #1f2328"></div>
<svg style="left:668px;top:11.6px" width="12" height="12" viewBox="0 0 12 12"><circle cx="6" cy="6" r="4.900" fill="none" stroke="#9b9ea3" stroke-width="1.300"/><path fill="none" stroke="#9b9ea3" stroke-width="1.200" d="M6 3v3.200H3.600"/></svg>
<div class="abs" style="left:698.500px;top:9px;font-size:14px;line-height:17px;color:#c9cbcf;letter-spacing:-.4px">60</div>
<svg style="left:771px;top:11.8px" width="11" height="11" viewBox="0 0 11 11"><path fill="#fff" d="M.3 0L10.700 5.500.3 11z"/></svg>
<div class="abs" style="left:803.300px;top:11.5px;width:11.400px;height:11.500px;background:#fff;border-radius:1px"></div>
<svg style="left:524px;top:38.6px" width="14" height="11.500" viewBox="0 0 17 14"><g fill="#fff"><rect x="5.700" y="0" width="5.600" height="4.600" rx=".8"/><rect x="0" y="9.400" width="4.800" height="4.600" rx=".8"/><rect x="6.100" y="9.400" width="4.800" height="4.600" rx=".8"/><rect x="12.200" y="9.400" width="4.800" height="4.600" rx=".8"/><path d="M7.900 4.400h1.200v2H15v3.300h-1.200V7.600H9.100v2.100H7.900V7.600H3.200v2.100H2V6.400h5.900z"/></g></svg>
<div class="abs sel" style="left:550px;top:33.7px;width:91.500px"><span style="letter-spacing:-.3px">Test data</span></div>
<svg style="left:628.400px;top:41.3px" width="9.200" height="5.500" viewBox="0 0 9.200 5.500"><path fill="none" stroke="#fff" stroke-width="1.500" d="M.5.500L4.600 4.600 8.700.5"/></svg>
<svg style="left:649.500px;top:38.5px" width="17" height="14" viewBox="0 0 17 14"><path fill="#f2ca1d" stroke="#3a3412" stroke-width=".6" d="M16.400 .5H7.200a6.600 6.600 0 0 0 0 13.200h9.200V9.400H7.600a2.300 2.300 0 0 1 0-4.600h8.800z"/><path fill="#54502a" d="M13.500 .8h2.600v3.700h-2.600zM13.500 9.700h2.600v3.700h-2.600z"/></svg>
<svg style="left:676px;top:38.5px" width="12" height="12" viewBox="0 0 12 12"><path fill="#fff" d="M7 0h5v5l-1.700-1.700L7.800 5.800 6.200 4.200l2.500-2.500zM5 12H0V7l1.700 1.700L4.200 6.200l1.600 1.600-2.500 2.500z"/></svg>
<div class="abs" style="left:702px;top:38.6px;width:11.700px;height:11.500px;background:#fff;border-radius:2.500px"></div>
<svg style="left:728.700px;top:39px" width="13.400" height="11" viewBox="0 0 13.400 11"><rect width="13.400" height="11" rx="1.800" fill="#fff"/><path stroke="#2b2f38" stroke-width="2" d="M4.300 3.100l4.800 4.800M9.100 3.100L4.300 7.900"/></svg>
<div class="abs sel" style="left:755.300px;top:33.7px;width:70px"><span style="letter-spacing:-.3px">Edition</span></div>
<svg style="left:810.800px;top:41.3px" width="9.200" height="5.500" viewBox="0 0 9.200 5.500"><path fill="none" stroke="#fff" stroke-width="1.500" d="M.5.500L4.600 4.600 8.700.5"/></svg>
</div></div>
<div id="mid" class="abs">
<div class="abs" style="left:3px;top:0;width:146px;height:23px;background:#26292e"></div><div class="abs" style="left:3px;top:0;width:296px;height:23px;background:#222529;z-index:-1"></div><div class="abs tabt" style="left:13.5px;top:5px">Effects</div><div class="abs tabt" style="left:92.6px;top:5px">Align</div><div class="abs" style="left:3px;top:23px;width:296px;height:198px;background:#30353e"></div><svg style="left:13.5px;top:35px" width="12" height="11.500" viewBox="0 0 12 11.500"><path stroke="#4b84f0" stroke-width="3.100" stroke-linecap="round" d="M1.800 9.700L8.600 2.900"/><path fill="#4b84f0" d="M9.800 0l.5 1.200 1.200.5-1.200.5-.5 1.200-.5-1.200-1.200-.5 1.200-.5zM4.300.5l.3.800.8.300-.8.300-.3.800-.3-.8-.8-.3.8-.3z"/><path stroke="#1d2a4a" stroke-width=".7" d="M7.400 2.300l1.900 1.900"/></svg><div class="abs" style="left:31px;top:31.800px;font-size:13.300px;line-height:17px;font-weight:bold;color:#4b84f0;text-shadow:1px 1px 1px #10141f,0 0 2px #10141f;letter-spacing:-.3px">EFFECTS</div><div class="abs" style="left:255px;top:37.5px;width:28.500px;height:14px;border-radius:7px;background:#56595d"></div><div class="abs" style="left:244px;top:33.3px;width:22.600px;height:22.600px;border-radius:50%;background:#b9bbbd;box-shadow:0 1px 2px rgba(0,0,0,.4)"></div><div class="abs" style="left:249px;top:43.6px;width:12.500px;height:2px;background:#222"></div><div class="abs" style="left:13.5px;top:76px;font-size:13.500px;line-height:17px;color:#e8e9eb;-webkit-text-stroke:.15px #e8e9eb;white-space:nowrap;letter-spacing:-.25px">First, you have to select an Item on scene.</div><div class="abs" style="left:3px;top:223px;width:172px;height:21px;background:#26292e"></div><div class="abs tabt" style="left:13.5px;top:227px">Layers</div><div class="abs tabt" style="left:92.6px;top:227px">Test Data</div><div class="abs" style="left:3px;top:244px;width:296px;height:39px;background:#25292e"></div><div class="abs" style="left:6.8px;top:256px;font-size:12.300px;line-height:16px;color:#fff;-webkit-text-stroke:.25px #fff;letter-spacing:-.4px">LAYERS</div><svg style="left:236px;top:262.7px" width="9" height="4.500" viewBox="0 0 9 4.500"><path fill="#a4a7ac" d="M4.500 0L9 4.500H0z"/></svg><svg style="left:272.7px;top:262.2px" width="9" height="4.800" viewBox="0 0 9 4.800"><path fill="#a4a7ac" d="M0 0h9L4.500 4.800z"/></svg><div class="abs" style="left:3px;top:283px;width:296px;height:509px;overflow:hidden;background:#22252a"><div class="abs" style="left:0;top:0;width:96.500px;height:520px;background:#16181b"></div><div class="abs" style="left:96.500px;top:2.8px;width:199.500px;height:52.600px;background:#2b2f37"></div><div class="abs lname" style="left:102.3px;top:11.3px">ges</div><div class="abs ltype" style="left:102.3px;top:30.5px">Scene</div><svg style="left:279px;top:14.8px" width="14" height="9" viewBox="0 0 14 9"><path fill="none" stroke="#fff" stroke-width="1.300" d="M.7 4.500C2.300 1.900 4.500.7 7 .7s4.700 1.200 6.300 3.800C11.700 7.100 9.500 8.300 7 8.300S2.300 7.100.7 4.500z"/><circle cx="7" cy="4.300" r="2.700" fill="#fff"/><circle cx="6.200" cy="3.500" r="1" fill="#2b2f37"/></svg><svg style="left:281.0px;top:32.8px" width="9.200" height="11.500" viewBox="0 0 10 11.500" preserveAspectRatio="none"><path fill="none" stroke="#fff" stroke-width="1.500" d="M2.300 5.500V3.300a2.500 2.500 0 0 1 4.900-.6"/><rect x=".3" y="5.200" width="9.400" height="6.300" rx="1" fill="#fff"/></svg><div class="abs" style="left:23.3px;top:1.5px;width:50px;height:54.600px;background:#fff"></div><svg style="left:23.3px;top:1.5px" width="50" height="54.600" viewBox="0 0 50 54.600" font-family="'Liberation Sans',Arial,sans-serif"><text x="4" y="7.300" font-size="2.500" font-weight="bold" fill="#1e2235" textLength="30" lengthAdjust="spacingAndGlyphs">* Dont émissions de gaz</text><text x="4" y="10.600" font-size="2.500" font-weight="bold" fill="#1e2235" textLength="19" lengthAdjust="spacingAndGlyphs">à effet de serre</text><text x="4" y="14.500" font-size="1.900" fill="#9cc4e0" textLength="20" lengthAdjust="spacingAndGlyphs">peu d'émissions de CO₂</text><path fill="#d6ebf8" d="M4 15.8H9.3a1.30 1.30 0 0 1 0 2.60H4z"/><path fill="#c5e0f2" d="M4 19.8H12.0a1.30 1.30 0 0 1 0 2.60H4z"/><path fill="#8ea7c8" stroke="#6d88b3" stroke-width=".5" d="M4 23.8H13.8a2.80 2.80 0 0 1 0 5.60H4z"/><path fill="#6c81ab" d="M4 30.4H19.2a1.45 1.45 0 0 1 0 2.90H4z"/><path fill="#4b5484" d="M4 34.4H21.8a1.35 1.35 0 0 1 0 2.70H4z"/><path fill="#34315a" d="M4 38H24.5a1.35 1.35 0 0 1 0 2.70H4z"/><path fill="#1d1733" d="M4 41.7H27.2a1.45 1.45 0 0 1 0 2.90H4z"/><path stroke="#777" stroke-width=".35" d="M18 26.600h5"/><text x="26" y="27.600" font-size="2.600" font-weight="bold" fill="#333">20</text><text x="30" y="27.800" font-size="1.700" fill="#555">kg CO₂/m².an</text><text x="4" y="47.800" font-size="1.900" font-weight="bold" fill="#1e2235" textLength="16" lengthAdjust="spacingAndGlyphs">émissions de CO₂</text><text x="4" y="50.400" font-size="1.900" font-weight="bold" fill="#1e2235" textLength="16" lengthAdjust="spacingAndGlyphs">très importantes</text></svg><div class="abs" style="left:96.500px;top:58.0px;width:199.500px;height:52.600px;background:#2b2f37"></div><div class="abs lname" style="left:102.3px;top:66.5px">dpe</div><div class="abs ltype" style="left:102.3px;top:85.7px">Scene</div><svg style="left:279px;top:70.0px" width="14" height="9" viewBox="0 0 14 9"><path fill="none" stroke="#fff" stroke-width="1.300" d="M.7 4.500C2.300 1.900 4.500.7 7 .7s4.700 1.200 6.300 3.800C11.700 7.100 9.500 8.300 7 8.300S2.300 7.100.7 4.500z"/><circle cx="7" cy="4.300" r="2.700" fill="#fff"/><circle cx="6.200" cy="3.500" r="1" fill="#2b2f37"/></svg><svg style="left:281.0px;top:88.0px" width="9.200" height="11.500" viewBox="0 0 10 11.500" preserveAspectRatio="none"><path fill="none" stroke="#fff" stroke-width="1.500" d="M2.300 5.500V3.300a2.500 2.500 0 0 1 4.900-.6"/><rect x=".3" y="5.200" width="9.400" height="6.300" rx="1" fill="#fff"/></svg><div class="abs" style="left:10.7px;top:57.2px;width:74.500px;height:54.400px;background:#fff"></div><svg style="left:10.7px;top:57.2px" width="74.500" height="54.400" viewBox="0 0 74.500 54.400" font-family="'Liberation Sans',Arial,sans-serif"><rect x="3.500" y="4.500" width="23.500" height="9.800" rx="1" fill="#fff" stroke="#777" stroke-width=".6"/><path stroke="#777" stroke-width=".5" d="M16.500 4.500v9.800"/><text x="10" y="10.800" font-size="3.300" font-weight="bold" text-anchor="middle" fill="#222">20</text><text x="21.800" y="10.800" font-size="3.300" font-weight="bold" text-anchor="middle" fill="#222">40</text><path fill="#1f9c64" d="M27 3.6H37.4L42 9.05 37.4 14.5H27z"/><path fill="#3eae55" d="M27.3 15.3H46.0L48 17.65 46.0 20H27.3z"/><path fill="#9bca7b" d="M27.3 21.5H50.5L52.5 23.85 50.5 26.2H27.3z"/><path fill="#f3e514" d="M27.3 27.6H54.8L56.8 29.95 54.8 32.3H27.3z"/><path fill="#f1b313" d="M27.3 33.7H59.0L61 36.05 59.0 38.4H27.3z"/><path fill="#eb8233" d="M27.3 39.8H63.5L65.5 42.15 63.5 44.5H27.3z"/><path fill="#df2327" d="M27.3 46H68.0L70 48.35 68.0 50.7H27.3z"/><text x="28" y="13" font-size="10.500" font-weight="bold" fill="#fff">A</text><text x="28.300" y="19.200" font-size="3.600" font-weight="bold" fill="#fff" fill-opacity=".85">B</text><text x="28.300" y="25.400" font-size="3.600" font-weight="bold" fill="#fff" fill-opacity=".85">C</text><text x="28.300" y="31.500" font-size="3.600" font-weight="bold" fill="#fff" fill-opacity=".85">D</text><text x="28.300" y="37.600" font-size="3.600" font-weight="bold" fill="#fff" fill-opacity=".85">E</text><text x="28.300" y="43.700" font-size="3.600" font-weight="bold" fill="#fff" fill-opacity=".85">F</text><text x="28.300" y="49.900" font-size="3.600" font-weight="bold" fill="#fff" fill-opacity=".85">G</text><text x="22" y="44.500" font-size="1.500" fill="#999" text-anchor="middle">passoire</text><text x="22" y="46.500" font-size="1.500" fill="#999" text-anchor="middle">énergétique</text><text x="42" y="3.300" font-size="1.500" fill="#3a9a6a" text-anchor="middle">logement très performant</text></svg><div class="abs" style="left:96.500px;top:113.2px;width:199.500px;height:52.600px;background:#2b2f37"></div><div class="abs lname" style="left:102.3px;top:121.7px">legals</div><div class="abs ltype" style="left:102.3px;top:140.9px">Text</div><svg style="left:279px;top:125.2px" width="14" height="9" viewBox="0 0 14 9"><path fill="none" stroke="#fff" stroke-width="1.300" d="M.7 4.500C2.300 1.900 4.500.7 7 .7s4.700 1.200 6.300 3.800C11.700 7.100 9.500 8.300 7 8.300S2.300 7.100.7 4.500z"/><circle cx="7" cy="4.300" r="2.700" fill="#fff"/><circle cx="6.200" cy="3.500" r="1" fill="#2b2f37"/></svg><svg style="left:281.0px;top:143.2px" width="9.200" height="11.500" viewBox="0 0 10 11.500" preserveAspectRatio="none"><path fill="none" stroke="#fff" stroke-width="1.500" d="M2.300 5.500V3.300a2.500 2.500 0 0 1 4.900-.6"/><rect x=".3" y="5.200" width="9.400" height="6.300" rx="1" fill="#fff"/></svg><div class="abs" style="left:21.1px;top:112.4px;width:54.600px;height:54px;border-radius:11px;background:#fff"></div><svg style="left:35.3px;top:123.8px" width="27.200" height="28.600" viewBox="0 0 27.200 28.600"><path fill="#404040" d="M0 0h27.200v5.900H17.200V28.600h-7.200V5.900H0z"/></svg><div class="abs" style="left:96.500px;top:168.4px;width:199.500px;height:52.600px;background:#2b2f37"></div><div class="abs lname" style="left:102.3px;top:176.9px">bedrooms_icon</div><div class="abs ltype" style="left:102.3px;top:196.1px">SVG</div><svg style="left:279px;top:180.4px" width="14" height="9" viewBox="0 0 14 9"><path fill="none" stroke="#fff" stroke-width="1.300" d="M.7 4.500C2.300 1.900 4.500.7 7 .7s4.700 1.200 6.300 3.800C11.700 7.100 9.500 8.300 7 8.300S2.300 7.100.7 4.500z"/><circle cx="7" cy="4.300" r="2.700" fill="#fff"/><circle cx="6.200" cy="3.500" r="1" fill="#2b2f37"/></svg><svg style="left:281.0px;top:198.4px" width="9.200" height="11.500" viewBox="0 0 10 11.500" preserveAspectRatio="none"><path fill="none" stroke="#fff" stroke-width="1.500" d="M2.300 5.500V3.300a2.500 2.500 0 0 1 4.900-.6"/><rect x=".3" y="5.200" width="9.400" height="6.300" rx="1" fill="#fff"/></svg><div class="abs" style="left:21.1px;top:167.6px;width:54.600px;height:54px;border-radius:11px;background:#fff"></div><svg style="left:28.6px;top:171.6px" width="40" height="46" viewBox="0 0 40 46"><path fill="#e1e3ea" d="M7.300 0h21l11 11v32a2 2 0 0 1-2 2H7.300a2 2 0 0 1-2-2V2a2 2 0 0 1 2-2z"/><path fill="#c3c6d1" d="M28.300 0l11 11h-9a2 2 0 0 1-2-2z"/><rect x="0" y="21.500" width="33.800" height="16.500" fill="#f2b13f"/><text x="16.900" y="34" text-anchor="middle" font-family="'Liberation Sans',Arial,sans-serif" font-weight="bold" font-size="11.500" fill="#fff">SVG</text></svg><div class="abs" style="left:96.500px;top:223.6px;width:199.500px;height:52.600px;background:#2b2f37"></div><div class="abs lname" style="left:102.3px;top:232.1px">rooms_icon</div><div class="abs ltype" style="left:102.3px;top:251.3px">SVG</div><svg style="left:279px;top:235.6px" width="14" height="9" viewBox="0 0 14 9"><path fill="none" stroke="#fff" stroke-width="1.300" d="M.7 4.500C2.300 1.900 4.500.7 7 .7s4.700 1.200 6.300 3.800C11.700 7.100 9.500 8.300 7 8.300S2.300 7.100.7 4.500z"/><circle cx="7" cy="4.300" r="2.700" fill="#fff"/><circle cx="6.200" cy="3.500" r="1" fill="#2b2f37"/></svg><svg style="left:281.0px;top:253.6px" width="9.200" height="11.500" viewBox="0 0 10 11.500" preserveAspectRatio="none"><path fill="none" stroke="#fff" stroke-width="1.500" d="M2.300 5.500V3.300a2.500 2.500 0 0 1 4.900-.6"/><rect x=".3" y="5.200" width="9.400" height="6.300" rx="1" fill="#fff"/></svg><div class="abs" style="left:21.1px;top:222.8px;width:54.600px;height:54px;border-radius:11px;background:#fff"></div><svg style="left:28.6px;top:226.8px" width="40" height="46" viewBox="0 0 40 46"><path fill="#e1e3ea" d="M7.300 0h21l11 11v32a2 2 0 0 1-2 2H7.300a2 2 0 0 1-2-2V2a2 2 0 0 1 2-2z"/><path fill="#c3c6d1" d="M28.300 0l11 11h-9a2 2 0 0 1-2-2z"/><rect x="0" y="21.500" width="33.800" height="16.500" fill="#f2b13f"/><text x="16.900" y="34" text-anchor="middle" font-family="'Liberation Sans',Arial,sans-serif" font-weight="bold" font-size="11.500" fill="#fff">SVG</text></svg><div class="abs" style="left:96.500px;top:278.8px;width:199.500px;height:52.600px;background:#2b2f37"></div><div class="abs lname" style="left:102.3px;top:287.3px">surface_icon</div><div class="abs ltype" style="left:102.3px;top:306.5px">SVG</div><svg style="left:279px;top:290.8px" width="14" height="9" viewBox="0 0 14 9"><path fill="none" stroke="#fff" stroke-width="1.300" d="M.7 4.500C2.300 1.900 4.500.7 7 .7s4.700 1.200 6.300 3.800C11.700 7.100 9.500 8.300 7 8.300S2.300 7.100.7 4.500z"/><circle cx="7" cy="4.300" r="2.700" fill="#fff"/><circle cx="6.200" cy="3.500" r="1" fill="#2b2f37"/></svg><svg style="left:281.0px;top:308.8px" width="9.200" height="11.500" viewBox="0 0 10 11.500" preserveAspectRatio="none"><path fill="none" stroke="#fff" stroke-width="1.500" d="M2.300 5.500V3.300a2.500 2.500 0 0 1 4.900-.6"/><rect x=".3" y="5.200" width="9.400" height="6.300" rx="1" fill="#fff"/></svg><div class="abs" style="left:21.1px;top:278.0px;width:54.600px;height:54px;border-radius:11px;background:#fff"></div><svg style="left:28.6px;top:282.0px" width="40" height="46" viewBox="0 0 40 46"><path fill="#e1e3ea" d="M7.300 0h21l11 11v32a2 2 0 0 1-2 2H7.300a2 2 0 0 1-2-2V2a2 2 0 0 1 2-2z"/><path fill="#c3c6d1" d="M28.300 0l11 11h-9a2 2 0 0 1-2-2z"/><rect x="0" y="21.500" width="33.800" height="16.500" fill="#f2b13f"/><text x="16.900" y="34" text-anchor="middle" font-family="'Liberation Sans',Arial,sans-serif" font-weight="bold" font-size="11.500" fill="#fff">SVG</text></svg><div class="abs" style="left:96.500px;top:334.0px;width:199.500px;height:52.600px;background:#2b2f37"></div><div class="abs lname" style="left:102.3px;top:342.5px">bedrooms_text</div><div class="abs ltype" style="left:102.3px;top:361.7px">Text</div><svg style="left:279px;top:346.0px" width="14" height="9" viewBox="0 0 14 9"><path fill="none" stroke="#fff" stroke-width="1.300" d="M.7 4.500C2.300 1.900 4.500.7 7 .7s4.700 1.200 6.300 3.800C11.700 7.100 9.500 8.300 7 8.300S2.300 7.100.7 4.500z"/><circle cx="7" cy="4.300" r="2.700" fill="#fff"/><circle cx="6.200" cy="3.500" r="1" fill="#2b2f37"/></svg><svg style="left:281.0px;top:364.0px" width="9.200" height="11.500" viewBox="0 0 10 11.500" preserveAspectRatio="none"><path fill="none" stroke="#fff" stroke-width="1.500" d="M2.300 5.500V3.300a2.500 2.500 0 0 1 4.900-.6"/><rect x=".3" y="5.200" width="9.400" height="6.300" rx="1" fill="#fff"/></svg><div class="abs" style="left:21.1px;top:333.2px;width:54.600px;height:54px;border-radius:11px;background:#fff"></div><svg style="left:35.3px;top:344.6px" width="27.200" height="28.600" viewBox="0 0 27.200 28.600"><path fill="#404040" d="M0 0h27.200v5.900H17.200V28.600h-7.200V5.900H0z"/></svg><div class="abs" style="left:96.500px;top:389.2px;width:199.500px;height:52.600px;background:#2b2f37"></div><div class="abs lname" style="left:102.3px;top:397.7px">logo</div><div class="abs ltype" style="left:102.3px;top:416.9px">Image</div><svg style="left:279px;top:401.2px" width="14" height="9" viewBox="0 0 14 9"><path fill="none" stroke="#fff" stroke-width="1.300" d="M.7 4.500C2.300 1.900 4.500.7 7 .7s4.700 1.200 6.300 3.800C11.700 7.100 9.500 8.300 7 8.300S2.300 7.100.7 4.500z"/><circle cx="7" cy="4.300" r="2.700" fill="#fff"/><circle cx="6.200" cy="3.500" r="1" fill="#2b2f37"/></svg><svg style="left:281.0px;top:419.2px" width="9.200" height="11.500" viewBox="0 0 10 11.500" preserveAspectRatio="none"><path fill="none" stroke="#fff" stroke-width="1.500" d="M2.300 5.500V3.300a2.500 2.500 0 0 1 4.900-.6"/><rect x=".3" y="5.200" width="9.400" height="6.300" rx="1" fill="#fff"/></svg><div class="abs" style="left:21.1px;top:388.4px;width:54.600px;height:54px;border-radius:11px;background:#fff"></div><svg style="left:21.1px;top:388.4px" width="54.600" height="54" viewBox="0 0 54.600 54" font-family="'Liberation Sans',Arial,sans-serif"><path fill="none" stroke="#1d7d78" stroke-width="2.600" stroke-linejoin="miter" d="M3.500 22.500L24.500 8.500 32 14"/><path fill="none" stroke="#1d7d78" stroke-width="2" d="M34 22L42 14.500 49 21.500"/><path fill="none" stroke="#8fb9b6" stroke-width=".8" d="M30 12l5-2.500L51 21"/><g fill="#1d7d78"><rect x="24" y="16.500" width="3" height="3"/><rect x="28" y="16.500" width="3" height="3"/><rect x="24" y="20.500" width="3" height="3"/><rect x="28" y="20.500" width="3" height="3"/></g><text x="1.800" y="38.500" font-size="12.300" fill="#1d7d78" textLength="50.500" lengthAdjust="spacingAndGlyphs">L'agence</text></svg><div class="abs" style="left:96.500px;top:444.4px;width:199.500px;height:52.600px;background:#2b2f37"></div><div class="abs lname" style="left:102.3px;top:452.9px">qr_code</div><div class="abs ltype" style="left:102.3px;top:472.1px">QRCode</div><svg style="left:279px;top:456.4px" width="14" height="9" viewBox="0 0 14 9"><path fill="none" stroke="#fff" stroke-width="1.300" d="M.7 4.500C2.300 1.900 4.500.7 7 .7s4.700 1.200 6.300 3.800C11.700 7.100 9.500 8.300 7 8.300S2.300 7.100.7 4.500z"/><circle cx="7" cy="4.300" r="2.700" fill="#fff"/><circle cx="6.200" cy="3.500" r="1" fill="#2b2f37"/></svg><svg style="left:281.0px;top:474.4px" width="9.200" height="11.500" viewBox="0 0 10 11.500" preserveAspectRatio="none"><path fill="none" stroke="#fff" stroke-width="1.500" d="M2.300 5.500V3.300a2.500 2.500 0 0 1 4.900-.6"/><rect x=".3" y="5.200" width="9.400" height="6.300" rx="1" fill="#fff"/></svg><div class="abs" style="left:21.1px;top:443.6px;width:54.600px;height:54px;border-radius:11px;background:#fff"></div><svg style="left:21.1px;top:443.6px" width="54.600" height="54" viewBox="0 0 54.600 54"><path fill="#444" d="M10.00 9.50h3.23v3.23h-3.23zM13.18 9.50h3.23v3.23h-3.23zM16.36 9.50h3.23v3.23h-3.23zM25.91 9.50h3.23v3.23h-3.23zM29.09 9.50h3.23v3.23h-3.23zM35.45 9.50h3.23v3.23h-3.23zM38.64 9.50h3.23v3.23h-3.23zM41.82 9.50h3.23v3.23h-3.23zM10.00 12.68h3.23v3.23h-3.23zM16.36 12.68h3.23v3.23h-3.23zM22.73 12.68h3.23v3.23h-3.23zM35.45 12.68h3.23v3.23h-3.23zM41.82 12.68h3.23v3.23h-3.23zM10.00 15.86h3.23v3.23h-3.23zM13.18 15.86h3.23v3.23h-3.23zM16.36 15.86h3.23v3.23h-3.23zM25.91 15.86h3.23v3.23h-3.23zM35.45 15.86h3.23v3.23h-3.23zM38.64 15.86h3.23v3.23h-3.23zM41.82 15.86h3.23v3.23h-3.23zM22.73 19.05h3.23v3.23h-3.23zM25.91 19.05h3.23v3.23h-3.23zM29.09 19.05h3.23v3.23h-3.23zM13.18 22.23h3.23v3.23h-3.23zM16.36 22.23h3.23v3.23h-3.23zM10.00 25.41h3.23v3.23h-3.23zM29.09 25.41h3.23v3.23h-3.23zM38.64 25.41h3.23v3.23h-3.23zM41.82 25.41h3.23v3.23h-3.23zM16.36 28.59h3.23v3.23h-3.23zM22.73 28.59h3.23v3.23h-3.23zM25.91 28.59h3.23v3.23h-3.23zM29.09 28.59h3.23v3.23h-3.23zM38.64 28.59h3.23v3.23h-3.23zM32.27 31.77h3.23v3.23h-3.23zM35.45 31.77h3.23v3.23h-3.23zM41.82 31.77h3.23v3.23h-3.23zM10.00 34.95h3.23v3.23h-3.23zM13.18 34.95h3.23v3.23h-3.23zM16.36 34.95h3.23v3.23h-3.23zM22.73 34.95h3.23v3.23h-3.23zM29.09 34.95h3.23v3.23h-3.23zM38.64 34.95h3.23v3.23h-3.23zM41.82 34.95h3.23v3.23h-3.23zM10.00 38.14h3.23v3.23h-3.23zM16.36 38.14h3.23v3.23h-3.23zM32.27 38.14h3.23v3.23h-3.23zM38.64 38.14h3.23v3.23h-3.23zM41.82 38.14h3.23v3.23h-3.23zM10.00 41.32h3.23v3.23h-3.23zM13.18 41.32h3.23v3.23h-3.23zM16.36 41.32h3.23v3.23h-3.23zM22.73 41.32h3.23v3.23h-3.23zM29.09 41.32h3.23v3.23h-3.23zM38.64 41.32h3.23v3.23h-3.23z"/></svg><div class="abs" style="left:96.500px;top:499.6px;width:199.500px;height:52.600px;background:#2b2f37"></div><div class="abs" style="left:21.1px;top:498.8px;width:54.600px;height:54px;border-radius:11px;background:#fff"></div><svg style="left:35.3px;top:510.2px" width="27.200" height="28.600" viewBox="0 0 27.200 28.600"><path fill="#404040" d="M0 0h27.200v5.900H17.200V28.600h-7.200V5.900H0z"/></svg></div><div class="abs" style="left:0;top:792px;width:303px;height:21px;background:#2b2f38"></div><div class="abs" style="left:2.5px;top:796px;font-size:12.500px;line-height:15px;color:#fff;letter-spacing:-.3px">Layers: 22</div><svg style="left:281px;top:798.3px" width="9.500" height="10.500" viewBox="0 0 9 11"><path fill="#8a8d92" d="M0 1.100h2.700L3.300 0h2.400l.6 1.100H9v1.300H0zM.7 3.200h7.600l-.5 6.800a1 1 0 0 1-1 1H2.200a1 1 0 0 1-1-1z"/><path stroke="#2b2f38" stroke-width=".7" d="M3 4.500v4.800M4.500 4.500v4.800M6 4.500v4.800"/></svg>
</div>
<div id="right" class="abs">
<svg style="left:139.7px;top:374.0px" width="38" height="38" viewBox="0 0 15 15"><path fill="#6a6e77" d="M10.800.5a1.500 1.500 0 0 1 2.100 0l1.600 1.600a1.500 1.500 0 0 1 0 2.100l-1.300 1.300-3.700-3.700zM8.600 2.700l3.700 3.700-7.600 7.600-4.100.9a.4.400 0 0 1-.5-.5l.9-4.100z"/><path fill="#30353e" d="M2.100 11.100l1.800 1.800-1.700.4-.5-.5z"/></svg>
<div class="abs" style="left:90.6px;top:426.2px;font-size:13.500px;line-height:16px;color:#6d717a;white-space:nowrap;letter-spacing:-.21px">Select an item to edit it.</div>
</div>
<div id="strip" class="abs">
<div class="abs" style="left:0;top:0;width:53px;height:54.400px;background:#26292d"></div>
<div class="abs" style="left:0;top:54.400px;width:53px;height:378.9px;background:#2b2f38"></div>
<div class="abs" style="left:0;top:759.5px;width:53px;height:54px;background:#2b2f38"></div>
<svg style="left:19.8px;top:22.3px" width="14" height="13" viewBox="0 0 15 15" preserveAspectRatio="none"><path fill="#f5c842" d="M10.800.5a1.500 1.500 0 0 1 2.100 0l1.600 1.600a1.500 1.500 0 0 1 0 2.100l-1.300 1.300-3.700-3.700zM8.600 2.700l3.700 3.700-7.600 7.600-4.100.9a.4.400 0 0 1-.5-.5l.9-4.100z"/></svg>
<svg style="left:18.4px;top:75.500px" width="17.300" height="14.600" viewBox="0 0 17.300 14.600"><path fill="#fff" stroke="#2b2f38" stroke-width=".5" stroke-linejoin="round" d="M8.65 0.00 12.08 2.15 12.08 6.45 8.65 8.60 5.22 6.45 5.22 2.15z"/><path fill="none" stroke="#2b2f38" stroke-width=".75" d="M5.22 2.15L8.65 4.94 12.08 2.15M8.65 4.94V8.60"/><path fill="#fff" stroke="#2b2f38" stroke-width=".5" stroke-linejoin="round" d="M4.50 6.00 7.93 8.15 7.93 12.45 4.50 14.60 1.07 12.45 1.07 8.15z"/><path fill="none" stroke="#2b2f38" stroke-width=".75" d="M1.07 8.15L4.50 10.95 7.93 8.15M4.50 10.95V14.60"/><path fill="#fff" stroke="#2b2f38" stroke-width=".5" stroke-linejoin="round" d="M12.80 6.00 16.23 8.15 16.23 12.45 12.80 14.60 9.37 12.45 9.37 8.15z"/><path fill="none" stroke="#2b2f38" stroke-width=".75" d="M9.37 8.15L12.80 10.95 16.23 8.15M12.80 10.95V14.60"/></svg>
<svg style="left:19.8px;top:130.4px" width="14.800" height="12.600" viewBox="0 0 14.800 12.600"><path fill="none" stroke="#fff" stroke-width="1.300" stroke-linejoin="round" d="M3.400.7h8l2.700 3.600-6.700 7.600L.7 4.300z"/><path fill="none" stroke="#fff" stroke-width="1" stroke-linejoin="round" d="M.7 4.300h13.400M5.300.7L4.400 4.300l3 7.600 3-7.600L9.500.7M7.400.7L4.400 4.300M7.400.7l3 3.600"/></svg>
<svg style="left:19.8px;top:184.4px" width="14.800" height="13" viewBox="0 0 14.800 13"><rect x=".7" y=".7" width="13.400" height="11.600" rx="1.300" fill="none" stroke="#fff" stroke-width="1.300"/><path fill="#fff" d="M2.500 10.500V9l2.700-2.700 1.800 1.800 2.900-3.300 2.400 2.700v3z"/><circle cx="4.400" cy="4" r="1.200" fill="#fff"/></svg>
<svg style="left:19.8px;top:237.7px" width="14" height="12.800" viewBox="0 0 14 12.800"><path fill="#fff" d="M0 4.600h3.300C2.300 3 2.900.3 4.900.3s2.500 2.700 1.600 4.300h3.300v3.100c1.600-1 4.200-.4 4.200 1.500s-2.600 2.600-4.200 1.600v2H6.300c.8-1.300.4-2.700-1.300-2.700S2.900 11.500 3.700 12.800H0z"/></svg>
<svg style="left:19.8px;top:291.5px" width="14" height="13.200" viewBox="0 0 14 13.200"><path stroke="#fff" stroke-width="2.600" stroke-linecap="round" d="M1.800 11.400L9 4.200"/><path stroke="#2b2f38" stroke-width=".8" d="M7.300 3.800l2.100 2.100"/><path fill="#fff" d="M11.300 0l.6 1.400 1.400.6-1.400.6-.6 1.400-.6-1.400L9.300 2l1.400-.6zM4.500.6l.4 1 1 .4-1 .4-.4 1-.4-1-1-.4 1-.4zM12.200 6.300l.4.900.9.4-.9.400-.4.900-.4-.9-.9-.4.900-.4z"/></svg>
<svg style="left:20.7px;top:346px" width="12.700" height="14.500" viewBox="0 0 12.700 14.500"><g fill="#fff"><ellipse cx="6.350" cy="2.300" rx="6.350" ry="2.300"/><path d="M0 3.900c1 1.300 3.600 1.800 6.350 1.800S11.700 5.200 12.700 3.900v2.500c0 1.200-2.800 2.200-6.350 2.200S0 7.600 0 6.400zM0 7.900c1 1.300 3.600 1.800 6.350 1.800s5.350-.5 6.350-1.800v2.400c0 1.200-2.800 2.200-6.350 2.200S0 11.500 0 10.300zM0 11.800c1 1.300 3.600 1.800 6.350 1.800s5.350-.5 6.350-1.800v.5c0 1.200-2.800 2.200-6.350 2.200S0 13.500 0 12.300z"/></g></svg>
<svg style="left:19.8px;top:400.7px" width="14.500" height="13" viewBox="0 0 17 14" preserveAspectRatio="none"><g fill="#fff"><rect x="5.700" y="0" width="5.600" height="4.600" rx=".8"/><rect x="0" y="9.400" width="4.800" height="4.600" rx=".8"/><rect x="6.100" y="9.400" width="4.800" height="4.600" rx=".8"/><rect x="12.200" y="9.400" width="4.800" height="4.600" rx=".8"/><path d="M7.900 4.400h1.200v2H15v3.300h-1.200V7.600H9.100v2.100H7.900V7.600H3.200v2.100H2V6.400h5.900z"/></g></svg>
<svg style="left:10.6px;top:781.2px" width="12.700" height="12.500" viewBox="0 0 12.700 12.500"><g fill="#fff"><path d="M3.800 2.600a2.600 2.600 0 0 1 5.100 0z"/><path d="M3.300 3.700h2.500v8.600C4.300 12.300 3.300 10.700 3.300 9zM6.900 3.700h2.500V9c0 1.700-1 3.300-2.500 3.300z"/><path d="M0 6.300h3v1.200H0zM9.700 6.300h3v1.200h-3zM.9 2.600l2.500 1.700-.6.900L.3 3.500zM11.800 2.600L9.300 4.300l.6.900 2.500-1.700zM.3 11.200l2.600-2.100.7.900L1 12.100zM12.400 11.200L9.800 9.100l-.7.900 2.600 2.100z"/></g></svg>
<svg style="left:33.7px;top:781.2px" width="8.700" height="12.200" viewBox="0 0 8.700 12.200"><path fill="none" stroke="#fff" stroke-width="2.600" d="M1.400 1.200l5 4.900-5 4.900"/></svg>
</div>
</div>
</body>
</html>
